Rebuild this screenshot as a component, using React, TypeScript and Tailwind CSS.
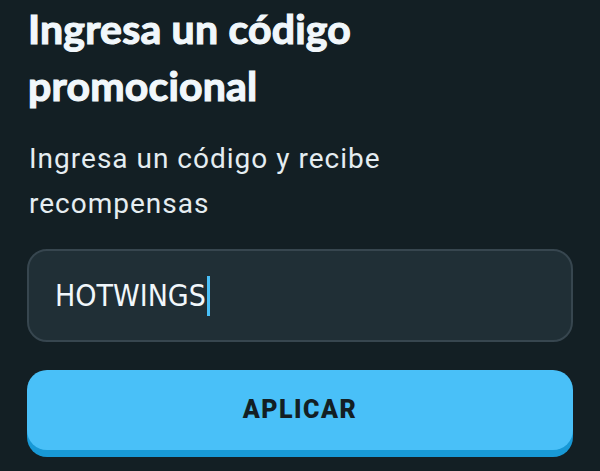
import React from "react";

export default function App() {
  return (
    <div className="w-[600px] h-[471px] bg-[#131f24] overflow-hidden flex flex-col px-[27px]">
      <h1 className="pl-[1px] text-[41px] leading-[57px] font-bold tracking-[0.2px] text-[#f1f7fb] [-webkit-text-stroke:1.2px_#f1f7fb] [font-family:Lato,'Noto_Sans',sans-serif]">
        Ingresa un código
        <br />
        promocional
      </h1>
      <p className="mt-[22px] pl-[2px] text-[28px] leading-[45px] tracking-[1px] text-[#e5edf1] [font-family:Roboto,'Noto_Sans',sans-serif]">
        Ingresa un código y recibe
        <br />
        recompensas
      </p>
      <div className="mt-[23px] h-[93px] rounded-[20px] border-2 border-[#37464f] bg-[#202f36] flex items-center pl-[26px]">
        <span className="text-[30px] text-[#f1f7fb] [font-family:'DejaVu_Sans_Condensed',Roboto,sans-serif]">HOTWINGS</span>
        <span className="ml-[1px] w-[3px] h-[40px] bg-[#49c0f8]" />
      </div>
      <button className="mt-[28px] h-[80px] rounded-[20px] bg-[#49c0f8] shadow-[0_7px_0_#1899d6] flex items-center justify-center w-full">
        <span className="text-[25px] font-black tracking-[1.5px] text-[#131f24] [font-family:Roboto,'Noto_Sans',sans-serif]">APLICAR</span>
      </button>
    </div>
  );
}
